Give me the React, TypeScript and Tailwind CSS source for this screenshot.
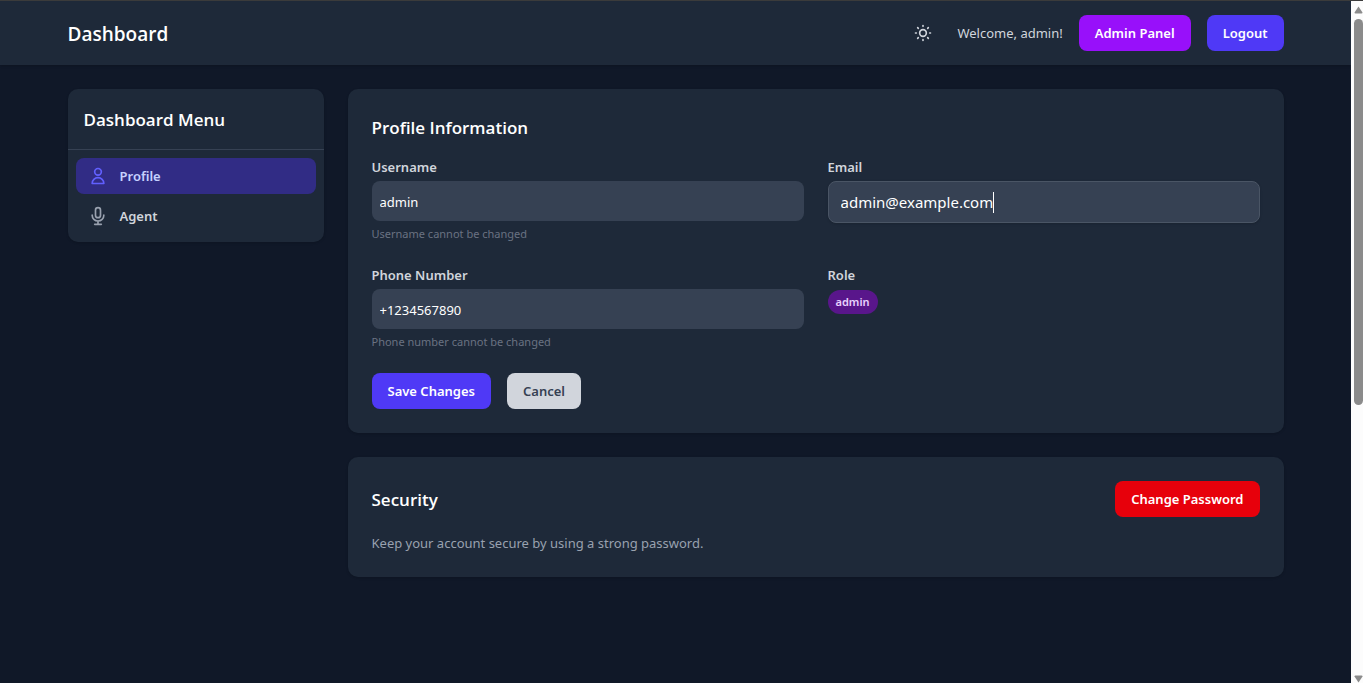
import { useState, type ReactNode } from "react";

function Icon({ d, className }: { d: string; className: string }) {
  return (
    <svg className={className} viewBox="0 0 24 24" fill="none" stroke="currentColor" strokeWidth={2} strokeLinecap="round" strokeLinejoin="round" aria-hidden="true">
      <path d={d} />
    </svg>
  );
}

const sunPath =
  "M12 3v1m0 16v1m9-9h-1M4 12H3m15.364 6.364l-.707-.707M6.343 6.343l-.707-.707m12.728 0l-.707.707M6.343 17.657l-.707.707M16 12a4 4 0 11-8 0 4 4 0 018 0z";
const userPath = "M16 7a4 4 0 11-8 0 4 4 0 018 0zM12 14a7 7 0 00-7 7h14a7 7 0 00-7-7z";
const micPath =
  "M19 11a7 7 0 01-7 7m0 0a7 7 0 01-7-7m7 7v4m0 0H8m4 0h4m-4-8a3 3 0 01-3-3V5a3 3 0 116 0v6a3 3 0 01-3 3z";

function Header() {
  return (
    <header className="bg-gray-800 shadow">
      <div className="mx-auto flex h-16 max-w-7xl items-center justify-between px-8">
        <h1 className="pt-0.5 font-['Open_Sans',sans-serif] text-[19px] font-semibold text-white">Dashboard</h1>
        <div className="flex items-center gap-4">
          <button type="button" aria-label="Toggle theme" className="rounded-md p-2 text-gray-300">
            <Icon d={sunPath} className="size-5" />
          </button>
          <span className="text-[13px] leading-5 text-gray-300">Welcome, admin!</span>
          <button type="button" className="h-9 rounded-lg bg-purple-600 px-4 text-[13px] leading-5 font-semibold text-white">
            Admin Panel
          </button>
          <button type="button" className="h-9 rounded-lg bg-indigo-600 px-4 text-[13px] leading-5 font-semibold text-white">
            Logout
          </button>
        </div>
      </div>
    </header>
  );
}

function CardTitle({ children }: { children: ReactNode }) {
  return <h2 className="pt-px font-['Open_Sans',sans-serif] text-[17px] leading-[27px] font-semibold text-white">{children}</h2>;
}

function Sidebar() {
  return (
    <aside className="w-64 shrink-0 rounded-[10px] bg-gray-800 shadow">
      <div className="border-b border-gray-700 p-4">
        <CardTitle>Dashboard Menu</CardTitle>
      </div>
      <nav className="flex flex-col gap-1 p-2">
        <a href="#profile" className="flex items-center gap-3 rounded-lg bg-indigo-900 px-3 py-2 text-[13px] leading-5 font-semibold text-indigo-200">
          <Icon d={userPath} className="size-5 text-indigo-500" />
          Profile
        </a>
        <a href="#agent" className="flex items-center gap-3 rounded-lg px-3 py-2 text-[13px] leading-5 font-semibold text-gray-300">
          <Icon d={micPath} className="size-5 text-gray-400" />
          Agent
        </a>
      </nav>
    </aside>
  );
}

function FieldLabel({ id, children }: { id: string; children: ReactNode }) {
  return (
    <label htmlFor={id} className="block text-[13px] leading-5 font-semibold text-gray-300">
      {children}
    </label>
  );
}

function LockedField({ id, label, value, hint }: { id: string; label: string; value: string; hint: string }) {
  return (
    <div>
      <FieldLabel id={id}>{label}</FieldLabel>
      <input id={id} readOnly value={value} className="mt-1 block h-10 w-full rounded-lg bg-gray-700 px-2 pt-0.5 text-[13px] text-white outline-none" />
      <p className="mt-1 pt-px text-[11px] leading-[15px] text-gray-500">{hint}</p>
    </div>
  );
}

function ProfileCard() {
  const [email, setEmail] = useState("admin@example.com");
  return (
    <section className="flex flex-col rounded-[10px] bg-gray-800 p-6 shadow">
      <CardTitle>Profile Information</CardTitle>
      <div className="mt-4 grid grid-cols-2 gap-6">
        <LockedField id="username" label="Username" value="admin" hint="Username cannot be changed" />
        <div>
          <FieldLabel id="email">Email</FieldLabel>
          <div className="mt-1 flex h-[42px] items-center rounded-lg border border-gray-600 bg-gray-700 px-3 shadow-sm">
            <input
              id="email"
              type="email"
              value={email}
              onChange={(e) => setEmail(e.target.value)}
              className="[field-sizing:content] bg-transparent text-[15px] leading-6 text-white outline-none"
            />
            <span className="h-[21px] w-px bg-white" aria-hidden="true" />
          </div>
        </div>
        <LockedField id="phone" label="Phone Number" value="+1234567890" hint="Phone number cannot be changed" />
        <div className="flex flex-col items-start">
          <p className="text-[13px] leading-5 font-semibold text-gray-300">Role</p>
          <span className="mt-[5px] rounded-full bg-purple-900 px-2 py-1 text-[11px] leading-4 font-semibold text-purple-200">admin</span>
        </div>
      </div>
      <div className="mt-6 flex gap-4">
        <button type="button" className="h-9 rounded-lg bg-indigo-600 px-4 text-[13px] leading-5 font-semibold text-white">
          Save Changes
        </button>
        <button type="button" className="h-9 rounded-lg bg-gray-300 px-4 text-[13px] leading-5 font-semibold text-gray-700">
          Cancel
        </button>
      </div>
    </section>
  );
}

function SecurityCard() {
  return (
    <section className="rounded-[10px] bg-gray-800 p-6 shadow">
      <div className="mb-4 flex items-center justify-between">
        <CardTitle>Security</CardTitle>
        <button type="button" className="h-9 rounded-lg bg-red-600 px-4 text-[13px] leading-5 font-semibold text-white">
          Change Password
        </button>
      </div>
      <p className="text-[13px] leading-5 text-gray-400">Keep your account secure by using a strong password.</p>
    </section>
  );
}

function ScrollRail() {
  return (
    <div className="sticky top-0 flex h-[calc(100vh-1px)] w-3 shrink-0 flex-col items-end bg-[#fcfcfc] pt-[5px]" aria-hidden="true">
      <svg className="h-2 w-[9px]" viewBox="0 0 9 8">
        <path d="M4.500 0.500L8.500 6.500Q8.500 7.500 7.500 7.500H1.500Q0.500 7.500 0.500 6.500Z" fill="#8b8b8b" />
      </svg>
      <div className="mt-[5px] h-[57%] w-[9px] rounded-full bg-[#8b8b8b]" />
      <svg className="mt-auto h-2 w-[9px]" viewBox="0 0 9 8">
        <path d="M4.500 7.500L8.500 1.500Q8.500 0.500 7.500 0.500H1.500Q0.500 0.500 0.500 1.500Z" fill="#8b8b8b" />
      </svg>
    </div>
  );
}

export default function App() {
  return (
    <div className="flex min-h-screen border-t border-[#3c3c3c] bg-gray-900 font-['Noto_Sans','Open_Sans',sans-serif]">
      <div className="min-w-0 flex-1">
        <Header />
        <main className="mx-auto flex max-w-7xl items-start gap-6 px-8 py-6">
          <Sidebar />
          <div className="flex min-w-0 flex-1 flex-col gap-6">
            <ProfileCard />
            <SecurityCard />
          </div>
        </main>
      </div>
      <ScrollRail />
    </div>
  );
}
